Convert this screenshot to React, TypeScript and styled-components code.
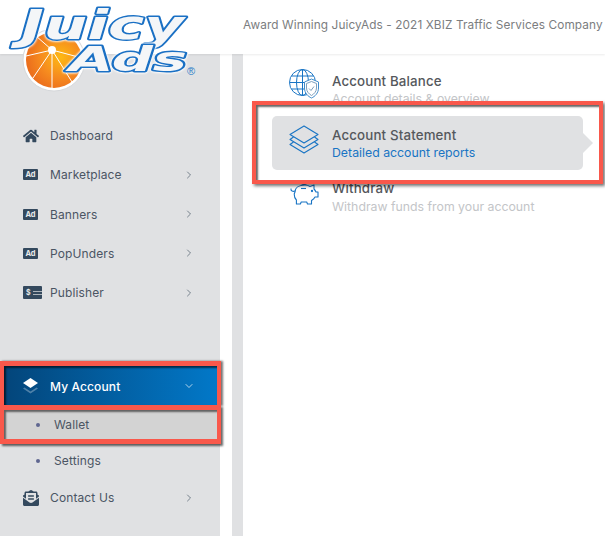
import React from "react";
import styled, { createGlobalStyle } from "styled-components";
import { FaHome, FaEnvelopeOpenText } from "react-icons/fa";
import { ChevronRight, ChevronDown } from "lucide-react";

const Global = createGlobalStyle`
  html, body { margin: 0; padding: 0; background: #fff; }
  body { font-family: Inter, "Open Sans", sans-serif; overflow: hidden; }
`;

const Logo = () => (
  <LogoSvg viewBox="0 0 230 100" aria-label="JuicyAds">
    <defs>
      <radialGradient id="peel" cx="0.62" cy="0.45" r="0.65">
        <stop offset="0" stopColor="#fdb913" />
        <stop offset="0.55" stopColor="#f68b1f" />
        <stop offset="1" stopColor="#ea6a1c" />
      </radialGradient>
    </defs>
    <circle cx="54" cy="60" r="31" fill="#fff" stroke="#d5d7da" strokeWidth="1" />
    <circle cx="54" cy="60" r="28" fill="url(#peel)" />
    <g stroke="#fff" strokeWidth="1">
      <line x1="52" y1="50" x2="52" y2="88" />
      <line x1="52" y1="50" x2="26" y2="56" />
      <line x1="52" y1="50" x2="33" y2="78" />
      <line x1="52" y1="50" x2="72" y2="82" />
      <line x1="52" y1="50" x2="36" y2="36" />
      <line x1="52" y1="50" x2="82" y2="58" />
    </g>
    <circle cx="52" cy="50" r="4" fill="#fff" />
    <LogoWord x="21" y="39" textLength="163" lengthAdjust="spacingAndGlyphs" fontSize="40">Juicy</LogoWord>
    <LogoWord x="69" y="71" textLength="118" lengthAdjust="spacingAndGlyphs" fontSize="33">Ads</LogoWord>
    <Registered x="187" y="75">®</Registered>
  </LogoSvg>
);

const AdIcon = () => <AdBadge>Ad</AdBadge>;

const PublisherIcon = () => (
  <PublisherBadge>
    $<PublisherLines />
  </PublisherBadge>
);

const StackIcon = () => (
  <svg width="15" height="16" viewBox="0 0 15 16">
    <path d="M7.500 0 15 5 7.500 10 0 5Z" fill="#fff" />
    <path d="M1.500 9.500 7.500 13.500 13.500 9.500 15 10.500 7.500 15.500 0 10.500Z" fill="#fff" opacity="0.3" />
  </svg>
);

const GlobeIcon = () => (
  <svg width="30" height="30" viewBox="0 0 30 30" fill="none" stroke="#1874c4" strokeWidth="1">
    <circle cx="13.500" cy="13.500" r="13" />
    <ellipse cx="13.500" cy="13.500" rx="6" ry="13" />
    <path d="M13.500 .5v26M.5 13.500h26M2.500 7h22M2.500 20h14" />
    <path d="M22.500 10 29.500 13v6c0 5-3.500 8.500-7 10-3.500-1.500-7-5-7-10v-6z" fill="#fff" stroke="#3f8ccb" />
    <path d="M22.500 12.500 27.500 14.500v4.500c0 3.500-2.500 6-5 7.500-2.500-1.500-5-4-5-7.500v-4.500z" stroke="#7d9fbd" />
    <path d="m20 19.500 2 2 3-4" stroke="#7d9fbd" />
  </svg>
);

const LayersIcon = () => (
  <svg width="30" height="30" viewBox="0 0 30 30" fill="none" stroke="#1874c4" strokeWidth="1.100" strokeLinejoin="round">
    <path d="M15 1 29 9.500 15 18 1 9.500Z" />
    <path d="M4.500 12 1 14.500 15 23 29 14.500 25.500 12" />
    <path d="M4.500 17 1 19.500 15 28 29 19.500 25.500 17" />
  </svg>
);

const PiggyIcon = () => (
  <svg width="30" height="30" viewBox="0 0 30 30" fill="none" stroke="#1874c4" strokeWidth="1.100" strokeLinejoin="round">
    <circle cx="15" cy="3.500" r="3" />
    <path d="M6 14c0-5 5-7 10-7 2 0 3.500.5 5 1.500l4-1.500v4c1 1 1.500 2 2 3h2v5h-3c-.8 1.500-2 2.500-3.500 3.500v3.500h-4l-.8-2h-5.500l-.8 2h-4v-4c-1.500-1.500-2.200-4-2.200-6z" />
    <path d="M6 13c-2 1-4.500 0-4-2.500" />
    <path d="M12 10.500h5" />
    <circle cx="23" cy="13" r=".6" />
  </svg>
);

const Arrow = () => <ChevronRight size={12} strokeWidth={1.4} color="#4b5a69" />;

const App = () => (
  <>
    <Global />
    <Page>
      <Header>
        <Tagline>Award Winning JuicyAds - 2021 XBIZ Traffic Services Company</Tagline>
      </Header>
      <Logo />
      <Body>
        <Sidebar>
          <NavGroup>
            <NavItem>
              <IconSlot><FaHome size={16} color="#34495e" /></IconSlot>
              <NavLabel>Dashboard</NavLabel>
            </NavItem>
            <NavItem>
              <IconSlot><AdIcon /></IconSlot>
              <NavLabel>Marketplace</NavLabel>
              <Arrow />
            </NavItem>
            <NavItem>
              <IconSlot><AdIcon /></IconSlot>
              <NavLabel>Banners</NavLabel>
              <Arrow />
            </NavItem>
            <NavItem>
              <IconSlot><AdIcon /></IconSlot>
              <NavLabel>PopUnders</NavLabel>
              <Arrow />
            </NavItem>
            <NavItem>
              <IconSlot><PublisherIcon /></IconSlot>
              <NavLabel>Publisher</NavLabel>
              <Arrow />
            </NavItem>
          </NavGroup>
          <AccountRow>
            <IconSlot><StackIcon /></IconSlot>
            <AccountLabel>My Account</AccountLabel>
            <ChevronDown size={12} strokeWidth={1.4} color="#fff" />
          </AccountRow>
          <WalletRow>
            <Bullet />
            <SubLabel>Wallet</SubLabel>
          </WalletRow>
          <SubRow>
            <Bullet />
            <SubLabel>Settings</SubLabel>
          </SubRow>
          <ContactRow>
            <IconSlot><FaEnvelopeOpenText size={16} color="#34495e" /></IconSlot>
            <NavLabel>Contact Us</NavLabel>
            <Arrow />
          </ContactRow>
        </Sidebar>
        <Rail />
        <Content>
          <BalanceEntry>
            <GlobeSlot><GlobeIcon /></GlobeSlot>
            <EntryText>
              <EntryTitle>Account Balance</EntryTitle>
              <EntrySub>Account details &amp; overview</EntrySub>
            </EntryText>
          </BalanceEntry>
          <Callout>
            <ActiveCard>
              <EntryIcon><LayersIcon /></EntryIcon>
              <EntryText>
                <EntryTitle>Account Statement</EntryTitle>
                <EntrySub $active>Detailed account reports</EntrySub>
              </EntryText>
            </ActiveCard>
          </Callout>
          <MenuEntry>
            <EntryIcon><PiggyIcon /></EntryIcon>
            <EntryText>
              <EntryTitle>Withdraw</EntryTitle>
              <WithdrawSub>Withdraw funds from your account</WithdrawSub>
            </EntryText>
          </MenuEntry>
        </Content>
      </Body>
    </Page>
  </>
);

export default App;

const Page = styled.div`
  position: relative;
  width: 605px;
  height: 536px;
  overflow: hidden;
  background: #fff;
`;

const Header = styled.header`
  height: 54px;
  padding-left: 243px;
  display: flex;
  align-items: center;
  box-sizing: border-box;
  background: #fff;
  box-shadow: 0 1px 2px rgba(0, 0, 0, 0.08);
  position: relative;
  z-index: 1;
`;

const Tagline = styled.div`
  font-size: 11.8px;
  color: #7b7d80;
  white-space: nowrap;
  letter-spacing: 0.1px;
  padding-bottom: 4px;
`;

const LogoSvg = styled.svg`
  position: absolute;
  left: 0;
  top: 0;
  width: 230px;
  height: 100px;
  z-index: 2;
`;

const LogoWord = styled.text`
  font-family: "DejaVu Sans", sans-serif;
  font-weight: 700;
  font-style: italic;
  fill: #f4f6f8;
  stroke: #1a70c4;
  stroke-width: 2.8px;
  stroke-linejoin: round;
  paint-order: stroke;
  filter: drop-shadow(0 0 1px #fff) drop-shadow(0 0 1px #fff);
`;

const Registered = styled.text`
  font-family: "Liberation Sans", sans-serif;
  font-size: 11px;
  fill: #2a7cc7;
`;

const Body = styled.div`
  display: flex;
  height: 482px;
`;

const Sidebar = styled.nav`
  width: 220px;
  background: #e0e1e3;
  padding-top: 62px;
  box-sizing: border-box;
  flex-shrink: 0;
`;

const NavGroup = styled.div`
  display: flex;
  flex-direction: column;
`;

const NavItem = styled.div`
  display: flex;
  align-items: center;
  height: 39.25px;
  padding: 0 25px 0 23px;
`;

const IconSlot = styled.span`
  width: 27px;
  display: flex;
  align-items: center;
  flex-shrink: 0;
`;

const NavLabel = styled.span`
  flex: 1;
  font-size: 12px;
  color: #4b5563;
  letter-spacing: 0.12px;
`;

const AdBadge = styled.span`
  width: 15px;
  height: 11px;
  background: #34495e;
  border-radius: 1px;
  color: #e8e9ea;
  font-size: 7.5px;
  font-weight: 700;
  display: flex;
  align-items: center;
  justify-content: center;
`;

const PublisherBadge = styled.span`
  width: 19px;
  height: 13px;
  background: #34495e;
  border-radius: 1px;
  color: #e8e9ea;
  font-size: 7px;
  font-weight: 700;
  display: flex;
  align-items: center;
  gap: 1px;
  padding-left: 3px;
  box-sizing: border-box;
`;

const PublisherLines = styled.span`
  width: 9px;
  height: 4px;
  box-sizing: border-box;
  border-top: 1px solid #aeb5bc;
  border-bottom: 1px solid #aeb5bc;
  margin-left: 1px;
`;

const AccountRow = styled.div`
  margin-top: 49px;
  height: 45px;
  box-sizing: border-box;
  display: flex;
  align-items: center;
  padding: 0 22px 0 19px;
  width: 221px;
  position: relative;
  border: 5px solid #f9584b;
  border-left-width: 4px;
  border-right-width: 4px;
  border-bottom: none;
  background: linear-gradient(90deg, #03457a 0%, #0278c8 100%);
  box-shadow: inset 2px 2px 2px rgba(0, 0, 0, 0.6), 2px 0 2px rgba(0, 0, 0, 0.55);
`;

const AccountLabel = styled.span`
  flex: 1;
  font-size: 12px;
  font-weight: 500;
  color: #fff;
  letter-spacing: 0.12px;
`;

const WalletRow = styled.div`
  width: 221px;
  height: 39px;
  margin-top: -1px;
  box-sizing: border-box;
  display: flex;
  align-items: center;
  padding-left: 32px;
  border: 5px solid #f9584b;
  border-left-width: 4px;
  border-right-width: 4px;
  background: #d3d3d3;
  position: relative;
  box-shadow: inset 2px 2px 2px rgba(0, 0, 0, 0.55), 2px 2px 2px rgba(0, 0, 0, 0.6);
`;

const SubRow = styled.div`
  height: 33px;
  display: flex;
  align-items: center;
  padding-left: 36px;
`;

const Bullet = styled.span`
  width: 4px;
  height: 4px;
  border-radius: 50%;
  background: #5f6690;
  margin-right: 14px;
`;

const SubLabel = styled.span`
  font-size: 12px;
  color: #4b5563;
  letter-spacing: 0.12px;
`;

const ContactRow = styled(NavItem)`
  margin-top: 1px;
`;

const Rail = styled.div`
  width: 11px;
  margin-left: 12px;
  background: #e0e1e3;
  flex-shrink: 0;
`;

const Content = styled.main`
  flex: 1;
  padding: 16px 0 0 9px;
  display: flex;
  flex-direction: column;
`;

const MenuEntry = styled.div`
  display: flex;
  align-items: flex-start;
  padding-left: 37px;
  gap: 13px;
`;

const BalanceEntry = styled(MenuEntry)`
  height: 30px;
  padding-top: 1px;
`;

const EntryIcon = styled.span`
  display: flex;
  width: 30px;
  flex-shrink: 0;
`;

const GlobeSlot = styled(EntryIcon)`
  margin-top: -2px;
`;

const EntryText = styled.div`
  margin-top: 1px;
`;

const EntryTitle = styled.div`
  font-size: 13.3px;
  font-weight: 500;
  color: #55585c;
  letter-spacing: 0.15px;
  line-height: 18px;
`;

const EntrySub = styled.div<{ $active?: boolean }>`
  font-size: 12.3px;
  color: ${({ $active }) => ($active ? "#1874c4" : "#c3c5c8")};
  line-height: 18px;
`;

const WithdrawSub = styled(EntrySub)`
  margin-top: 1px;
`;

const Callout = styled.div`
  margin-bottom: -6px;
  width: 351px;
  height: 83px;
  box-sizing: border-box;
  border: 4px solid #f9584b;
  padding: 11px 0 0 16px;
  position: relative;
  z-index: 1;
  background: #fff;
  box-shadow: inset 2px 2px 2px rgba(0, 0, 0, 0.6), 2px 2px 3px rgba(0, 0, 0, 0.55);
`;

const ActiveCard = styled.div`
  width: 311px;
  height: 54px;
  box-sizing: border-box;
  position: relative;
  display: flex;
  align-items: flex-start;
  gap: 13px;
  padding: 9px 0 0 17px;
  border-radius: 5px;
  background: #e0e1e3;

  &::after {
    content: "";
    position: absolute;
    right: -10px;
    top: 17px;
    border-left: 10px solid #e0e1e3;
    border-top: 10px solid transparent;
    border-bottom: 10px solid transparent;
  }
`;
